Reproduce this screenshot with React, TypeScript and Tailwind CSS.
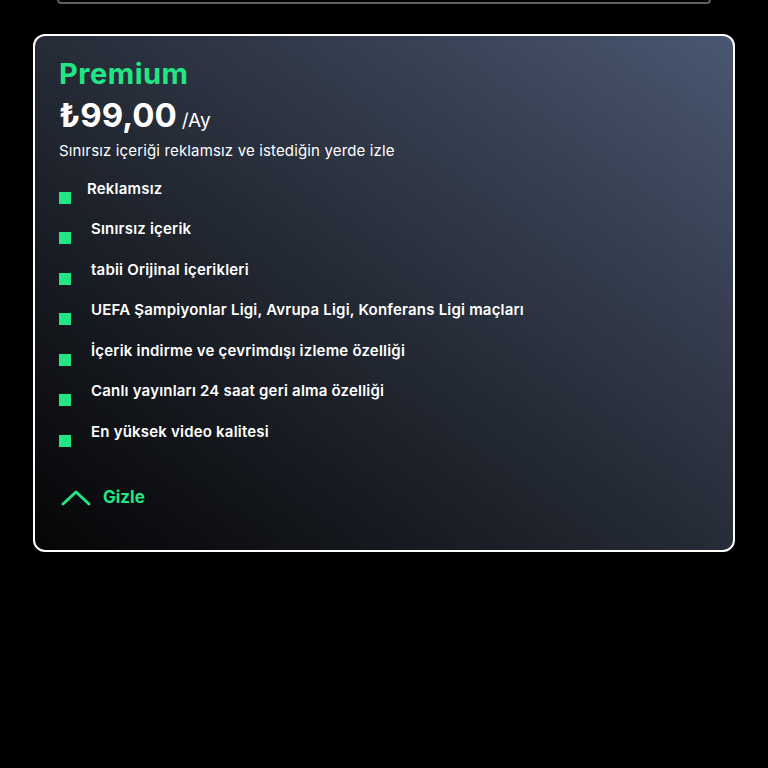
import React from "react";

const items = [
  { t: "Reklamsız", pl: "pl-[16px]" },
  { t: "Sınırsız içerik", pl: "pl-[20px]" },
  { t: "tabii Orijinal içerikleri", pl: "pl-[20px]" },
  { t: "UEFA Şampiyonlar Ligi, Avrupa Ligi, Konferans Ligi maçları", pl: "pl-[20px]" },
  { t: "İçerik indirme ve çevrimdışı izleme özelliği", pl: "pl-[20px]" },
  { t: "Canlı yayınları 24 saat geri alma özelliği", pl: "pl-[20px]" },
  { t: "En yüksek video kalitesi", pl: "pl-[20px]" },
];

export default function App() {
  return (
    <div className="min-h-[768px] w-[768px] bg-black" style={{ fontFamily: "Inter, 'Open Sans', sans-serif" }}>
      <div className="mx-[57px] h-[4px] rounded-b-[10px] border-x-2 border-b-2 border-[#5f5f5f]" />
      <div className="mx-[33px] mt-[30px] h-[518px] rounded-[12px] border-2 border-white bg-linear-to-bl from-[#4a5771] via-[#1f242d] via-60% to-[#060607] px-[24px] pt-[21px]">
        <div className="text-[29px] font-bold leading-[34px] tracking-[0.5px] text-[#22e584]">Premium</div>
        <div className="mt-[4px] flex items-baseline">
          <span className="text-[33px] font-bold leading-[40px] text-white">₺99,00</span>
          <span className="ml-[5px] text-[19px] text-white">/Ay</span>
        </div>
        <div className="mt-[5px] text-[15px] leading-[20px] tracking-[0.15px] text-white">Sınırsız içeriği reklamsız ve istediğin yerde izle</div>
        <div className="mt-[18px] flex flex-col">
          {items.map((it, i) => (
            <div key={i} className="flex h-[40.5px] items-start">
              <div className="mt-[13px] h-[12px] w-[12px] shrink-0 bg-[#22e584]" />
              <div className={`${it.pl} text-[15px] font-semibold leading-[20px] tracking-[0.2px] text-white`}>{it.t}</div>
            </div>
          ))}
        </div>
        <div className="mt-[23px] flex items-center">
          <svg width="32" height="20" viewBox="0 0 32 20" className="ml-[1px]">
            <path d="M3 16 L16 4 L29 16" fill="none" stroke="#22e584" strokeWidth="3" strokeLinecap="round" strokeLinejoin="round" />
          </svg>
          <span className="ml-[11px] text-[17px] font-bold text-[#22e584]">Gizle</span>
        </div>
      </div>
    </div>
  );
}
